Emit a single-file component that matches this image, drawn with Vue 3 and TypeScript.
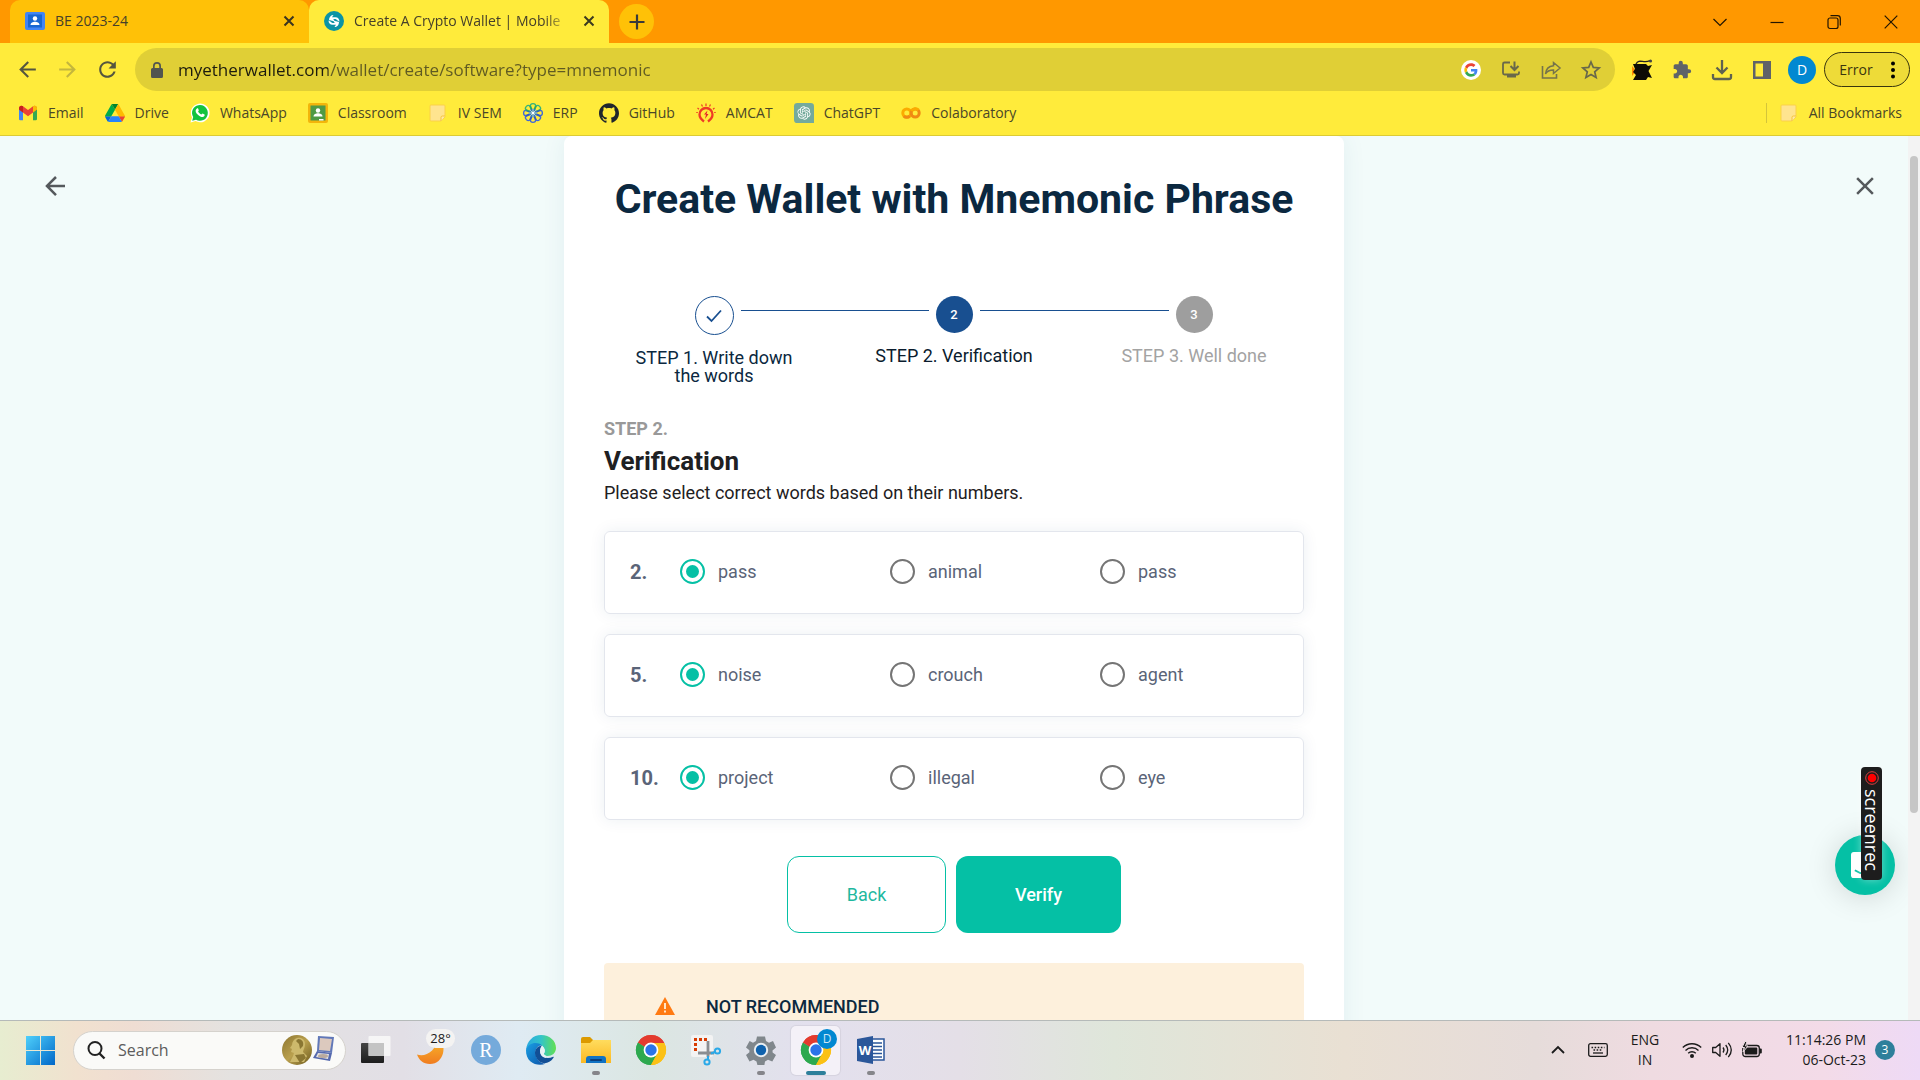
<script setup lang="ts">
import { reactive } from 'vue'

interface Bookmark {
  label: string
  box: string
  icon: string
}

interface Question {
  number: number
  words: string[]
}

interface TaskApp {
  label: string
  icon: string
  state: 'idle' | 'running' | 'active'
}

const folder =
  '<path d="M3 2h13a1 1 0 0 1 1 1v11l-4 4H3a1 1 0 0 1-1-1V3a1 1 0 0 1 1-1z" fill="#ffe48f" stroke="#fbd149"/><path d="M13 18v-3.500a1.500 1.500 0 0 1 1.500-1.500H17" fill="#ffe9a8" stroke="#f4c23a"/>'

const chrome =
  '<path d="M15 15 2 7.500A15 15 0 0 1 28 7.500z" fill="#e33b2e"/><path d="M15 15 28 7.500A15 15 0 0 1 15 30z" fill="#fbc116"/><path d="M15 15v15A15 15 0 0 1 2 7.500z" fill="#2da94f"/><path d="M15 8h13.300A15 15 0 0 1 15 30l6-11z" fill="#fbc116"/><path d="M2 7.500 9 18.500l6 4L15 30A15 15 0 0 1 2 7.500z" fill="#2da94f"/><path d="M15 30l6.300-11-6.300 4z" fill="#fbc116"/><path d="M15 30 21 19l-9 2-3-2.500z" fill="#2da94f"/><path d="M15 30 21.500 18.500 28 8A15 15 0 0 1 15 30z" fill="#fbc116"/><path d="M2 7.500A15 15 0 0 1 28.300 8H15l-6 4z" fill="#e33b2e"/><circle cx="15" cy="15" r="7.400" fill="#fff"/><circle cx="15" cy="15" r="5.700" fill="#2b74e8"/>'

const bookmarks: Bookmark[] = [
  {
    label: 'Email',
    box: '0 0 20 20',
    icon: '<path d="M1 4.500V16a1.200 1.200 0 0 0 1.200 1.200H5V9z" fill="#4285f4"/><path d="M15 9v8.200h2.800A1.200 1.200 0 0 0 19 16V4.500z" fill="#34a853"/><path d="M1 5.200C1 3 3.200 2 5 3.200l5 3.900 5-3.900c1.800-1.200 4-.2 4 2v1.300l-9 6.700-9-6.700z" fill="#ea4335"/><path d="M1 5.200v1.300l4 3V3.200C3.200 2 1 3 1 5.200z" fill="#c5221f"/><path d="M15 3.200v6.300l4-3V5.200c0-2.200-2.200-3.200-4-2z" fill="#fbbc04"/>',
  },
  {
    label: 'Drive',
    box: '0 0 87.3 78',
    icon: '<path d="m6.600 66.850 3.850 6.650c.8 1.400 1.950 2.500 3.300 3.300l13.750-23.800h-27.500c0 1.550.4 3.100 1.200 4.500z" fill="#0066da"/><path d="m43.650 25-13.750-23.800c-1.350.8-2.500 1.900-3.300 3.300l-25.400 44a9.060 9.060 0 0 0-1.200 4.500h27.500z" fill="#00ac47"/><path d="m73.550 76.800c1.350-.8 2.500-1.900 3.300-3.300l1.600-2.750 7.650-13.250c.8-1.400 1.200-2.950 1.200-4.500h-27.502l5.852 11.500z" fill="#ea4335"/><path d="m43.650 25 13.750-23.800c-1.350-.8-2.900-1.200-4.500-1.200h-18.500c-1.600 0-3.150.45-4.500 1.200z" fill="#00832d"/><path d="m59.800 53h-32.300l-13.750 23.800c1.350.8 2.900 1.200 4.500 1.200h50.800c1.600 0 3.150-.45 4.500-1.200z" fill="#2684fc"/><path d="m73.400 26.500-12.700-22c-.8-1.400-1.950-2.500-3.300-3.300l-13.750 23.800 16.150 28h27.450c0-1.550-.4-3.100-1.200-4.500z" fill="#ffba00"/>',
  },
  {
    label: 'WhatsApp',
    box: '0 0 20 20',
    icon: '<path d="M.5 19.500 2 14.500a9.400 9.400 0 1 1 3.600 3.600z" fill="#fff"/><path d="M2.200 17.800l1-3.700a7.900 7.900 0 1 1 2.800 2.700z" fill="#12c33e"/><path d="M6.900 5.400c.5-.4 1-.2 1.200.2l.7 1.700c.1.400-.6 1-.7 1.300.7 1.400 1.800 2.400 3.300 3 .3 0 .9-1.100 1.200-1l1.900.9c.6.500-.2 2-1.200 2.300-1.300.5-3.300-.1-5.400-2.100S5.300 8.200 5.800 6.900c.2-.6.600-1.200 1.100-1.500z" fill="#fff"/>',
  },
  {
    label: 'Classroom',
    box: '0 0 20 20',
    icon: '<rect width="20" height="20" rx="2" fill="#f3b50b"/><rect x="2.500" y="2.500" width="15" height="15" fill="#4f9a45"/><circle cx="10" cy="7.500" r="2.200" fill="#fff"/><path d="M5.500 13.500c0-2.400 2.500-3.200 4.500-3.200s4.500.8 4.500 3.200z" fill="#fff"/><rect x="11" y="16" width="4.500" height="1.500" fill="#fff"/>',
  },
  { label: 'IV SEM', box: '0 0 20 20', icon: folder },
  {
    label: 'ERP',
    box: '0 0 20 20',
    icon:
      [0, 45, 90, 135, 180, 225, 270, 315]
        .map(
          (a) =>
            `<g transform="rotate(${a} 10 10)"><path d="M8.800 6.500 7.300 2.500M11.200 6.500l1.500-4" stroke="${a > 60 && a < 300 ? '#2f55c8' : '#27a66b'}" stroke-width="1.300"/><path d="M7.300 3a2.700 2.400 0 0 1 5.400 0" fill="none" stroke="${a > 60 && a < 300 ? '#3f68d8' : '#35b37b'}" stroke-width="1.300"/></g>`,
        )
        .join('') + '<circle cx="10" cy="10" r="4.200" fill="#3579b5"/><path d="M10 6v8M6 10h8M7.200 7.200l5.600 5.600M12.800 7.200l-5.600 5.600" stroke="#dff0d0" stroke-width=".8"/><circle cx="10" cy="10" r="1.300" fill="#fff"/>',
  },
  {
    label: 'GitHub',
    box: '0 0 24 24',
    icon: '<path fill="#20262c" d="M12 .297c-6.630 0-12 5.373-12 12 0 5.303 3.438 9.800 8.205 11.385.6.113.82-.258.82-.577 0-.285-.01-1.040-.015-2.040-3.338.724-4.042-1.610-4.042-1.610C4.422 18.070 3.633 17.700 3.633 17.700c-1.087-.744.084-.729.084-.729 1.205.084 1.838 1.236 1.838 1.236 1.070 1.835 2.809 1.305 3.495.998.108-.776.417-1.305.76-1.605-2.665-.3-5.466-1.332-5.466-5.930 0-1.310.465-2.380 1.235-3.220-.135-.303-.54-1.523.105-3.176 0 0 1.005-.322 3.300 1.230.96-.267 1.980-.399 3-.405 1.020.006 2.040.138 3 .405 2.280-1.552 3.285-1.230 3.285-1.230.645 1.653.24 2.873.12 3.176.765.84 1.230 1.910 1.230 3.220 0 4.610-2.805 5.625-5.475 5.920.42.36.81 1.096.81 2.220 0 1.606-.015 2.896-.015 3.286 0 .315.21.69.825.57C20.565 22.092 24 17.592 24 12.297c0-6.627-5.373-12-12-12"/>',
  },
  {
    label: 'AMCAT',
    box: '0 0 20 20',
    icon: '<path d="M8 18.500C4.500 16 3.500 13.500 3.500 11.500a6.500 6.500 0 0 1 13 0c0 2-1 4.500-4.500 7" fill="none" stroke="#ee3b26" stroke-width="2.300"/><path d="M11.500 7.500 8 11.500h2l-1 4.500 3.500-5h-2z" fill="#e6222a"/><path d="M10 .5v2.500M5.500 1.500l1 2M14.500 1.500l-1 2M1.500 5l1.500 1.200M18.500 5 17 6.200M.3 9.500h1.500M19.700 9.500h-1.500" stroke="#ee3b26" stroke-width="1.200"/>',
  },
  {
    label: 'ChatGPT',
    box: '-6 -6 36 36',
    icon: '<path d="M0-6h24a6 6 0 0 1 6 6v30H0a6 6 0 0 1-6-6V0a6 6 0 0 1 6-6z" fill="#74aa9c"/><path fill="#fff" d="M22.282 9.821a5.985 5.985 0 0 0-.516-4.911 6.046 6.046 0 0 0-6.510-2.900A6.065 6.065 0 0 0 4.981 4.182a5.985 5.985 0 0 0-3.998 2.900 6.046 6.046 0 0 0 .743 7.097 5.980 5.980 0 0 0 .511 4.911 6.051 6.051 0 0 0 6.515 2.900A5.985 5.985 0 0 0 13.260 24a6.056 6.056 0 0 0 5.772-4.206 5.989 5.989 0 0 0 3.998-2.900 6.056 6.056 0 0 0-.748-7.073zm-9.022 12.608a4.476 4.476 0 0 1-2.876-1.041l.142-.08 4.778-2.758a.795.795 0 0 0 .393-.681v-6.737l2.020 1.169a.071.071 0 0 1 .038.052v5.583a4.504 4.504 0 0 1-4.495 4.494zM3.599 18.304a4.471 4.471 0 0 1-.535-3.014l.142.085 4.783 2.758a.771.771 0 0 0 .781 0l5.843-3.369v2.332a.08.08 0 0 1-.033.062L9.740 19.950a4.499 4.499 0 0 1-6.141-1.646zM2.341 7.896a4.485 4.485 0 0 1 2.365-1.973V11.600a.766.766 0 0 0 .388.677l5.814 3.354-2.020 1.169a.076.076 0 0 1-.071 0l-4.830-2.787A4.504 4.504 0 0 1 2.341 7.872zm16.596 3.856L13.104 8.364 15.119 7.200a.076.076 0 0 1 .071 0l4.830 2.791a4.494 4.494 0 0 1-.677 8.104v-5.677a.79.79 0 0 0-.407-.667zm2.011-3.023-.142-.085-4.774-2.782a.776.776 0 0 0-.785 0L9.409 9.230V6.897a.066.066 0 0 1 .028-.062l4.830-2.787a4.499 4.499 0 0 1 6.680 4.660zM8.307 12.863l-2.020-1.164a.08.08 0 0 1-.038-.057V6.074a4.499 4.499 0 0 1 7.376-3.454l-.142.081L8.704 5.459a.795.795 0 0 0-.393.681zm1.098-2.365 2.602-1.500 2.607 1.500v2.999l-2.597 1.500-2.607-1.500z"/>',
  },
  {
    label: 'Colaboratory',
    box: '0 0 20 20',
    icon: '<circle cx="5.800" cy="10" r="4" fill="none" stroke="#fbab00" stroke-width="3"/><circle cx="14.200" cy="10" r="4" fill="none" stroke="#f08a13" stroke-width="3"/><path d="M10.500 8a4.500 4.500 0 0 1 7-1" fill="none" stroke="#fbab00" stroke-width="3"/><path d="M8.800 13a4 4 0 0 1-6 0" fill="none" stroke="#f08a13" stroke-width="3"/>',
  },
]

const questions: Question[] = [
  { number: 2, words: ['pass', 'animal', 'pass'] },
  { number: 5, words: ['noise', 'crouch', 'agent'] },
  { number: 10, words: ['project', 'illegal', 'eye'] },
]

const answers = reactive<number[]>([0, 0, 0])

const steps = [
  { number: 1, label: 'STEP 1. Write down the words', state: 'done' },
  { number: 2, label: 'STEP 2. Verification', state: 'current' },
  { number: 3, label: 'STEP 3. Well done', state: 'ahead' },
]

const apps: TaskApp[] = [
  {
    label: 'Task view',
    state: 'idle',
    icon: '<defs><linearGradient id="tv" x2="0" y2="1"><stop stop-color="#444"/><stop offset="1" stop-color="#1d1d1d"/></linearGradient></defs><rect y="8" width="23" height="20" rx="1" fill="url(#tv)"/><rect x="7.500" y="1" width="22" height="20" rx="1" fill="#f8f8f8" opacity=".88"/><rect x="7.500" y="8" width="15.500" height="13" fill="#bdbdbd" opacity=".8"/>',
  },
  {
    label: 'Weather',
    state: 'idle',
    icon: '<defs><linearGradient id="mn" x2="0" y2="1"><stop stop-color="#f8be2c"/><stop offset="1" stop-color="#f07c20"/></linearGradient></defs><path d="M22 1c10 9 6 28-8 28C7 29 3 25 1 19.500c8 3 20-3 21-18.500z" fill="url(#mn)"/>',
  },
  {
    label: 'R',
    state: 'idle',
    icon: '<circle cx="15" cy="15" r="15" fill="#75aadb"/><text x="15" y="22" font-size="20" text-anchor="middle" fill="#fff" font-family="Liberation Serif, serif">R</text>',
  },
  {
    label: 'Edge',
    state: 'idle',
    icon: '<defs><linearGradient id="e1" x1="0" x2="1"><stop stop-color="#2aa9e0"/><stop offset=".5" stop-color="#33c4c9"/><stop offset="1" stop-color="#63e051"/></linearGradient><linearGradient id="e2" x1="0" y1="0" x2="1" y2="1"><stop stop-color="#1aa0e4"/><stop offset="1" stop-color="#0d53a8"/></linearGradient></defs><path d="M0 15C1 6 7 0 15 0c9 0 15 6 15 13 0 5-4 8-8.500 8-3 0-4-1.200-3.500-2.500 1.500-2 1-4-.5-6C13 7 4 9 0 15z" fill="url(#e1)"/><path d="M0 15C2 8 11 6 16 10.500c-3-.5-6.500 2-6.500 7 0 6 4.500 11 10 11.200C12 32-.5 28 0 15z" fill="url(#e2)"/><path d="M16 10.500c-6 .8-8.500 6-6 11.500 3 7 12 9 17.500.8.500-.9-.1-1.200-.9-.8-3.600 1.900-9.600 1.200-11.500-2-1.300-2.300-1.200-5.500.9-9.500z" fill="#124f96"/><path d="M16 10.500c-2.500 3-2.500 6.500-.9 9.500 1 1.600 3 2.600 5 3 .7-1.300.2-2-1-2.800-1.500-1.200-1.300-1.700-.8-2.500 1.200-2.300.2-5.200-2.300-7.200z" fill="#e8f1f5"/>',
  },
  {
    label: 'File Explorer',
    state: 'running',
    icon: '<defs><linearGradient id="fx" x2="0" y2="1"><stop stop-color="#ffdc5e"/><stop offset="1" stop-color="#fbb923"/></linearGradient></defs><path d="M0 4a2 2 0 0 1 2-2h7l3 3v5H0z" fill="#dc9a00"/><path d="M0 8h9l3-3h18v23H0z" fill="url(#fx)"/><path d="M5 28v-4a3 3 0 0 1 3-3h14a3 3 0 0 1 3 3v4z" fill="#1173c4"/><rect x="9" y="24" width="12" height="2" rx="1" fill="#0a3f7d"/>',
  },
  { label: 'Chrome', state: 'idle', icon: chrome },
  {
    label: 'Snipping Tool',
    state: 'idle',
    icon: '<rect width="22" height="22" rx="2" fill="#f3f3f3"/><path d="M3 4.500h13M4.500 3v13" fill="none" stroke="#d83b01" stroke-width="3" stroke-dasharray="3 2"/><path d="M7 18h16M17 6v16" stroke="#8a8d91" stroke-width="2.800"/><circle cx="26.500" cy="16" r="2.600" fill="none" stroke="#2aa9e8" stroke-width="2"/><circle cx="16" cy="27" r="2.600" fill="none" stroke="#2aa9e8" stroke-width="2"/><path d="M20 18.500l4-1.500M17 21v3.500" stroke="#2aa9e8" stroke-width="2"/>',
  },
  {
    label: 'Settings',
    state: 'running',
    icon: '<path d="M11 1.500h8l1 4.500 3 1.700L27 6l3 6.500-3.500 3 .1 2 3.400 2.500-3.700 6.500-4.300-1.700-3 1.700-.6 3.500h-7l-.9-3.500-3-1.700L3.500 26.500 0 20l3.400-2.800v-2L0 12.500 3.600 6 7 7.700 10 6z" fill="#80878c"/><circle cx="15" cy="15" r="7.200" fill="#e9eef2"/><circle cx="15" cy="15" r="5.200" fill="#0f62ad"/>',
  },
  { label: 'Chrome profile D', state: 'active', icon: chrome },
  {
    label: 'Word',
    state: 'running',
    icon: '<path d="M14 4h14v21H14z" fill="#fff" stroke="#2b579a" stroke-width="1.500"/><path d="M17 8h9M17 11.500h9M17 15h9M17 18.500h9M17 22h9" stroke="#2b579a" stroke-width="1.700"/><path d="M1 4 17 1v28L1 26z" fill="#2b579a"/><text x="9" y="20" font-size="13" font-weight="700" text-anchor="middle" fill="#fff" font-family="Open Sans, sans-serif">W</text>',
  },
]
</script>

<template>
  <div class="screen">
    <header class="browser">
      <div class="tabs">
        <div class="tab">
          <svg class="tab-icon" viewBox="0 0 20 20"><rect y="1" width="20" height="18" rx="2" fill="#4285f4" /><rect x="3" y="3.500" width="14" height="13" fill="#1967d2" /><circle cx="10" cy="7.500" r="2.200" fill="#fff" /><path d="M5.500 14c0-2.500 2.500-3.300 4.500-3.300s4.500.8 4.500 3.300z" fill="#fff" /></svg>
          <span class="tab-title">BE 2023-24</span>
          <button class="tab-close" aria-label="Close tab"><svg viewBox="0 0 12 12"><path d="M1.500 1.500l9 9M10.500 1.500l-9 9" stroke="#3b3420" stroke-width="2" /></svg></button>
        </div>
        <div class="tab tab-active">
          <svg class="tab-icon" viewBox="0 0 20 20"><circle cx="10" cy="10" r="10" fill="#0b93a5" /><path d="M5 9C5 6 7 4 9.500 4L8 6.200h3.500c2.500 0 4 2 4 4.300l-2.300-1.300c-.6-.9-1.500-1.200-2.700-1.200H9.200L11 10.500 8 9.800C6.500 9.300 5.500 9.500 5 9zM15 11c0 3-2 5-4.500 5l1.500-2.200H8.500c-2.500 0-4-2-4-4.300l2.300 1.300c.6.900 1.500 1.200 2.700 1.200h1.300L9 9.500l3 .7c1.500.5 2.500.3 3 .8z" fill="#fff" /></svg>
          <span class="tab-title tab-fade">Create A Crypto Wallet | Mobile</span>
          <button class="tab-close" aria-label="Close tab"><svg viewBox="0 0 12 12"><path d="M1.500 1.500l9 9M10.500 1.500l-9 9" stroke="#3b3a20" stroke-width="2" /></svg></button>
        </div>
        <button class="new-tab" aria-label="New tab"><svg viewBox="0 0 16 16"><path d="M8 .5v15M.5 8h15" stroke="#3a3a3a" stroke-width="2.200" /></svg></button>
        <div class="window-controls">
          <button aria-label="Search tabs"><svg viewBox="0 0 14 14"><path d="M.5 4 7 10.500 13.500 4" /></svg></button>
          <button aria-label="Minimize"><svg viewBox="0 0 14 14"><path d="M.5 7.500h13" /></svg></button>
          <button aria-label="Restore"><svg viewBox="0 0 14 14"><rect x="1" y="3" width="10" height="10.500" rx="2" /><path d="M3.500.7h7a2.800 2.800 0 0 1 2.800 2.800v7" /></svg></button>
          <button aria-label="Close"><svg viewBox="0 0 14 14"><path d="M.7.7l12.600 12.600M13.300.7.7 13.300" /></svg></button>
        </div>
      </div>

      <div class="toolbar">
        <div class="nav">
          <button aria-label="Back"><svg viewBox="0 0 24 24"><path fill="#55563f" d="M20 11H7.830l5.590-5.590L12 4l-8 8 8 8 1.410-1.410L7.830 13H20v-2z" /></svg></button>
          <button aria-label="Forward"><svg viewBox="0 0 24 24"><path fill="#c4b63d" d="m12 4-1.410 1.410L16.170 11H4v2h12.170l-5.580 5.590L12 20l8-8z" /></svg></button>
          <button aria-label="Reload"><svg viewBox="0 0 24 24"><path fill="#55563f" d="M17.650 6.350C16.200 4.900 14.210 4 12 4c-4.420 0-7.990 3.580-7.990 8s3.570 8 7.990 8c3.730 0 6.840-2.550 7.730-6h-2.080c-.82 2.330-3.040 4-5.650 4-3.310 0-6-2.690-6-6s2.690-6 6-6c1.660 0 3.140.69 4.220 1.780L13 11h7V4l-2.350 2.350z" /></svg></button>
        </div>
        <div class="address">
          <svg class="lock" viewBox="0 0 12 16"><path d="M6 0a4 4 0 0 0-4 4v2H1.500A1.500 1.500 0 0 0 0 7.500v7A1.500 1.500 0 0 0 1.500 16h9a1.500 1.500 0 0 0 1.500-1.500v-7A1.500 1.500 0 0 0 10.500 6H10V4a4 4 0 0 0-4-4zm0 1.700A2.300 2.300 0 0 1 8.300 4v2H3.700V4A2.300 2.300 0 0 1 6 1.700z" fill="#52554f" /></svg>
          <input class="url" type="text" aria-label="Address" value="myetherwallet.com/wallet/create/software?type=mnemonic" />
          <button aria-label="Google"><svg viewBox="-12 -12 72 72"><circle cx="24" cy="24" r="36" fill="#fff" /><path fill="#EA4335" d="M24 9.500c3.540 0 6.710 1.220 9.210 3.600l6.850-6.850C35.900 2.380 30.470 0 24 0 14.620 0 6.510 5.380 2.560 13.220l7.980 6.190C12.430 13.720 17.740 9.500 24 9.500z" /><path fill="#4285F4" d="M46.980 24.550c0-1.570-.15-3.090-.38-4.550H24v9.020h12.940c-.58 2.960-2.260 5.480-4.780 7.180l7.730 6c4.510-4.180 7.090-10.360 7.090-17.650z" /><path fill="#FBBC05" d="M10.530 28.590c-.48-1.450-.76-2.990-.76-4.590s.27-3.140.76-4.590l-7.980-6.190C.92 16.460 0 20.120 0 24c0 3.880.92 7.540 2.560 10.780l7.970-6.190z" /><path fill="#34A853" d="M24 48c6.480 0 11.930-2.130 15.890-5.810l-7.730-6c-2.150 1.450-4.920 2.300-8.160 2.300-6.260 0-11.570-4.220-13.470-9.910l-7.980 6.190C6.510 42.620 14.620 48 24 48z" /></svg></button>
          <button aria-label="Install"><svg viewBox="0 0 20 20"><path d="M9 2.500H3.500a1.500 1.500 0 0 0-1.500 1.500v9a1.500 1.500 0 0 0 1.500 1.500h13A1.500 1.500 0 0 0 18 13v-1.500" fill="none" stroke="#69684a" stroke-width="1.800" /><path d="M6 14h9v3.500H6z" fill="#69684a" /><path d="M13.500 1.500v8M9.500 6l4 4 4-4" fill="none" stroke="#69684a" stroke-width="2" /></svg></button>
          <button aria-label="Share"><svg viewBox="0 0 20 20"><path d="M1.500 6v12h14v-4" fill="none" stroke="#75734a" stroke-width="1.600" /><path d="M12.500 2.500 19 8l-6.500 5.500V10c-4 0-6.500 1-8 4 .4-5 3-7.700 8-8.200z" fill="none" stroke="#75734a" stroke-width="1.500" /></svg></button>
          <button aria-label="Bookmark"><svg viewBox="0 0 20 20"><path d="m10 2 2.300 5.400 5.900.5-4.500 3.900 1.400 5.700-5.100-3-5.100 3 1.400-5.700L1.800 7.900l5.900-.5z" fill="none" stroke="#69684a" stroke-width="1.700" /></svg></button>
        </div>
        <div class="extensions">
          <button aria-label="Extension"><svg viewBox="0 0 20 20"><path d="M0 6l4 5-4 5z" fill="#ff8a00" /><path d="M1 4h13l2 2 4-1-3.500 6L20 18l-4-1-2 3H1l3-5-3-3 2-3z" fill="#0c0c06" /><path d="M4 4c3-6 8 0 14-3.500" fill="none" stroke="#222" stroke-width="1.400" /><circle cx="18.500" cy="1" r="1.600" fill="#444" /></svg></button>
          <button aria-label="Extensions"><svg viewBox="0 0 24 24"><path fill="#5f6368" d="M20.500 11H19V7c0-1.100-.9-2-2-2h-4V3.500a2.500 2.500 0 0 0-5 0V5H4c-1.100 0-1.990.9-1.990 2v3.800H3.500c1.490 0 2.700 1.210 2.700 2.700s-1.210 2.700-2.700 2.700H2V20c0 1.100.9 2 2 2h3.800v-1.500c0-1.490 1.210-2.700 2.700-2.700s2.700 1.210 2.700 2.700V22H17c1.100 0 2-.9 2-2v-4h1.500a2.500 2.500 0 0 0 0-5z" /></svg></button>
          <button aria-label="Downloads"><svg viewBox="0 0 20 20"><path d="M10 0v13M4.500 7.500 10 13l5.500-5.500M1 14v3a2 2 0 0 0 2 2h14a2 2 0 0 0 2-2v-3" fill="none" stroke="#5f6250" stroke-width="2.300" /></svg></button>
          <button aria-label="Side panel"><svg viewBox="0 0 20 20"><path d="M1 1h18v18H1zM3.500 3.500v13H11v-13z" fill="#5f6368" fill-rule="evenodd" /></svg></button>
          <button class="avatar">D</button>
          <button class="error">Error<svg viewBox="0 0 4 18"><circle cx="2" cy="2.500" r="2" /><circle cx="2" cy="9" r="2" /><circle cx="2" cy="15.500" r="2" /></svg></button>
        </div>
      </div>

      <nav class="bookmarks">
        <a v-for="b in bookmarks" :key="b.label" href="#"><svg :viewBox="b.box" v-html="b.icon" /><span>{{ b.label }}</span></a>
        <a class="all-bookmarks" href="#"><svg viewBox="0 0 20 20" v-html="folder" /><span>All Bookmarks</span></a>
      </nav>
    </header>

    <div class="viewport">
      <div class="page">
        <div class="side">
          <button aria-label="Go back"><svg viewBox="0 0 24 24"><path fill="#55595c" d="M20 11v2H8l5.500 5.500-1.420 1.420L4.160 12l7.920-7.920L13.500 5.500 8 11h12z" /></svg></button>
        </div>
        <main class="wallet">
          <h1>Create Wallet with Mnemonic Phrase</h1>

          <ol class="stepper">
            <li v-for="s in steps" :key="s.number" :class="['step', s.state]">
              <span class="rail"></span>
              <span class="dot">
                <svg v-if="s.state === 'done'" viewBox="0 0 16 16"><path d="M1 8.500 5.500 13 15 2.500" fill="none" stroke="#184f90" stroke-width="1.800" /></svg>
                <template v-else>{{ s.number }}</template>
              </span>
              <span class="rail"></span>
              <span class="step-label">{{ s.label }}</span>
            </li>
          </ol>

          <p class="eyebrow">STEP 2.</p>
          <h2>Verification</h2>
          <p class="lead">Please select correct words based on their numbers.</p>

          <form class="quiz" @submit.prevent>
            <fieldset v-for="(q, qi) in questions" :key="q.number" class="question">
              <span class="number">{{ q.number }}.</span>
              <label v-for="(word, wi) in q.words" :key="wi" class="choice">
                <input v-model="answers[qi]" type="radio" :name="`word-${q.number}`" :value="wi" />
                <span>{{ word }}</span>
              </label>
            </fieldset>
            <div class="actions">
              <button type="button" class="btn back">Back</button>
              <button type="submit" class="btn verify">Verify</button>
            </div>
          </form>

          <section class="notice">
            <svg viewBox="0 0 20 18"><path d="M10 0 20 18H0z" fill="#ff7a12" /><path d="M10 6v6M10 13.500v2" stroke="#fff1dc" stroke-width="1.800" /></svg>
            <strong>NOT RECOMMENDED</strong>
          </section>
        </main>
        <div class="side side-right">
          <button aria-label="Close"><svg viewBox="0 0 24 24"><path fill="#55595c" d="M19 6.410 17.590 5 12 10.590 6.410 5 5 6.410 10.590 12 5 17.590 6.410 19 12 13.410 17.590 19 19 17.590 13.410 12z" /></svg></button>
        </div>
        <button class="chat" aria-label="Chat"><svg viewBox="0 0 28 28"><path d="M3 0h22a3 3 0 0 1 3 3v24H3a3 3 0 0 1-3-3V3a3 3 0 0 1 3-3z" fill="#fff" /><path d="M4 19q10 7 20 0" fill="none" stroke="#05c0a5" stroke-width="1.800" /></svg></button>
        <div class="recorder">
          <svg viewBox="0 0 14 14"><circle cx="7" cy="7" r="6.300" fill="none" stroke="#e04040" /><circle cx="7" cy="7" r="4.300" fill="#f00" /></svg>
          <span>screenrec</span>
        </div>
      </div>
      <div class="scrollbar"><div class="thumb"></div></div>
    </div>

    <footer class="taskbar">
      <button class="start" aria-label="Start"><svg viewBox="0 0 29 29"><defs><linearGradient id="win" x2="1" y2="1"><stop stop-color="#4fd0fb" /><stop offset="1" stop-color="#0067c8" /></linearGradient></defs><path d="M0 0h14v14H0zM15 0h14v14H15zM0 15h14v14H0zM15 15h14v14H15z" fill="url(#win)" /></svg></button>
      <label class="search">
        <svg class="lens" viewBox="0 0 18 18"><circle cx="8" cy="7.500" r="6.500" fill="none" stroke="#222" stroke-width="2" /><path d="m12.500 12.500 5 5" stroke="#222" stroke-width="2.400" /></svg>
        <input type="text" placeholder="Search" aria-label="Search" />
        <svg class="medal" viewBox="0 0 52 30">
          <defs><linearGradient id="gold" x2="1" y2="1"><stop stop-color="#8c7530" /><stop offset=".5" stop-color="#b9a04e" /><stop offset="1" stop-color="#6d5a1e" /></linearGradient></defs>
          <circle cx="15" cy="15" r="15" fill="url(#gold)" />
          <path d="M15 3c5-1 8 2 8 6s-2 6-2 8l4 4-3 6H8l3-6 1-3-3-1 1-3-2-1 2-3c0-3 2-6 5-7z" fill="#cdb96c" /><path d="M16 4c4 0 6 3 5 7l-3 3-1-5-3-3zM13 20l9-1 2 4-6 5z" fill="#8a7632" />
          <path d="m36 1 16 1-2 16-15-2z" fill="#6178b8" /><path d="m38 3 12 1-2 12-11-1z" fill="#dcc9be" /><path d="m35 16 15 2-2 8-17-3z" fill="#5569ae" /><path d="m36 18 11 1-1 5-12-2z" fill="#e6e3e2" /><ellipse cx="41" cy="21" rx="5" ry="2" fill="#b9aaa0" />
        </svg>
      </label>
      <div class="apps">
        <button v-for="a in apps" :key="a.label" :class="['app', a.state]" :aria-label="a.label">
          <svg viewBox="0 0 30 30" v-html="a.icon" />
          <span v-if="a.label === 'Weather'" class="temp">28°</span>
          <span v-if="a.state === 'active'" class="profile">D</span>
        </button>
      </div>
      <div class="tray">
        <button class="t-up" aria-label="Hidden icons"><svg viewBox="0 0 14 14"><path d="m1 10 6-6 6 6" fill="none" stroke="#1b1b1b" stroke-width="1.800" /></svg></button>
        <button class="t-key" aria-label="Touch keyboard"><svg viewBox="0 0 20 14"><rect x=".7" y=".7" width="18.600" height="12.600" rx="1.800" fill="none" stroke="#1b1b1b" stroke-width="1.300" /><path d="M3.500 4.500h13M5.500 7h9" stroke="#1b1b1b" stroke-width="1.600" stroke-dasharray="1.600 1.500" /><path d="M5 10h10" stroke="#1b1b1b" stroke-width="1.300" /></svg></button>
        <button class="lang">ENG<br />IN</button>
        <button class="status" aria-label="Network, volume and battery">
          <svg viewBox="0 0 20 16"><path d="M.8 5.500a13 13 0 0 1 18.400 0M3.500 8.500a9.200 9.200 0 0 1 13 0M6.200 11.300a5.400 5.400 0 0 1 7.600 0" fill="none" stroke="#1b1b1b" stroke-width="1.400" /><circle cx="10" cy="14" r="2" fill="#1b1b1b" /></svg>
          <svg viewBox="0 0 20 16"><path d="M.7 5.500h3L8 1.700v12.600l-4.300-3.800h-3z" fill="none" stroke="#1b1b1b" stroke-width="1.300" stroke-linejoin="round" /><path d="M11 5.500q2 2.500 0 5M13.700 3q4 5 0 10M16.300.8q6 7.200 0 14.400" fill="none" stroke="#1b1b1b" stroke-width="1.300" /></svg>
          <svg viewBox="0 0 20 16"><rect x=".8" y="3.500" width="16.500" height="11" rx="2.500" fill="none" stroke="#1b1b1b" stroke-width="1.300" /><rect x="2.800" y="5.500" width="12.500" height="7" rx="1" fill="#1b1b1b" /><path d="M18 6.500h.8a1 1 0 0 1 1 1v3a1 1 0 0 1-1 1H18z" fill="#1b1b1b" /><path d="M3-.5 0 5.500h2.500L1 10l5-6H3.500L5-.5z" fill="#1b1b1b" stroke="#e9dbe0" stroke-width="1" /></svg>
        </button>
        <button class="clock">11:14:26 PM<br />06-Oct-23</button>
        <span class="count">3</span>
      </div>
    </footer>
  </div>
</template>

<style>
body {
  overflow: hidden;
}
</style>

<style scoped>
* {
  box-sizing: border-box;
}

.screen {
  display: flex;
  flex-direction: column;
  height: 100vh;
  font-family: 'Open Sans', 'Noto Sans', sans-serif;
}

svg {
  display: block;
  flex: none;
  overflow: visible;
}

button {
  display: flex;
  align-items: center;
  justify-content: center;
  padding: 0;
  border: 0;
  background: none;
  font: inherit;
  color: inherit;
}

/* Browser frame */
.browser {
  flex: none;
  background: #ffeb3b;
  border-bottom: 1px solid #dccb35;
}

.tabs {
  display: flex;
  align-items: center;
  height: 43px;
  padding-left: 10px;
  background: #ff9800;
}

.tab {
  display: flex;
  align-items: center;
  width: 299px;
  height: 43px;
  padding: 0 14px 2px 15px;
  border-radius: 10px 10px 0 0;
  background: #ffc107;
  color: #46402a;
  font-size: 14px;
}

.tab-active {
  width: 300px;
  background: #ffeb3b;
}

.tab-icon {
  width: 20px;
  height: 20px;
  margin-right: 10px;
}

.tab-title {
  flex: 1;
  white-space: nowrap;
}

.tab-fade {
  margin-right: 12px;
  mask-image: linear-gradient(90deg, #000 88%, transparent);
}

.tab-close svg {
  width: 12px;
  height: 12px;
}

.new-tab {
  width: 35px;
  height: 35px;
  margin-left: 10px;
  border-radius: 50%;
  background: #ffc107;
}

.new-tab svg {
  width: 16px;
  height: 16px;
}

.window-controls {
  display: flex;
  margin-left: auto;
  padding-right: 1px;
  height: 36px;
}

.window-controls button {
  width: 57px;
}

.window-controls svg {
  width: 14px;
  height: 14px;
  fill: none;
  stroke: #221500;
  stroke-width: 1.2;
}

.toolbar {
  display: flex;
  align-items: center;
  height: 53px;
  padding-right: 10px;
}

.nav {
  display: flex;
  width: 135px;
  padding-left: 7px;
}

.nav button {
  width: 40px;
}

.nav svg {
  width: 25px;
  height: 25px;
}

.address {
  display: flex;
  flex: 1;
  align-items: center;
  height: 43px;
  padding: 0 4px 0 16px;
  border-radius: 22px;
  background: #e0cf36;
}

.lock {
  width: 12px;
  height: 16px;
  margin-right: 15px;
}

.url {
  flex: 1;
  min-width: 0;
  padding: 0;
  border: 0;
  outline: 0;
  background: linear-gradient(90deg, #1c1b0d 150px, #5f5a22 150px);
  background-clip: text;
  color: transparent;
  font: inherit;
  font-size: 17px;
}

.address button {
  width: 40px;
}

.address svg:not(.lock) {
  width: 20px;
  height: 20px;
}

.extensions {
  display: flex;
  align-items: center;
  padding-left: 7px;
}

.extensions button {
  width: 40px;
}

.extensions svg {
  width: 20px;
  height: 20px;
}

.extensions .avatar {
  width: 28px;
  height: 28px;
  margin: 0 8px 0 6px;
  border-radius: 50%;
  background: #0288d1;
  color: #fff;
  font-size: 14px;
}

.extensions .error {
  width: 86px;
  height: 35px;
  gap: 18px;
  border: 1px solid #39350e;
  border-radius: 18px;
  background: #eedb38;
  color: #3a360e;
  font-size: 14px;
}

.extensions .error svg {
  width: 4px;
  height: 18px;
}

.bookmarks {
  display: flex;
  align-items: center;
  gap: 21px;
  height: 39px;
  padding: 0 18px 6px;
  color: #4a4728;
  font-size: 14px;
}

.bookmarks a {
  display: flex;
  align-items: center;
  gap: 10px;
  color: inherit;
  text-decoration: none;
  white-space: nowrap;
}

.bookmarks svg {
  width: 20px;
  height: 20px;
}

.bookmarks .all-bookmarks {
  margin-left: auto;
  padding-left: 12px;
  border-left: 1px solid #d4c43a;
}

/* Page */
.viewport {
  display: flex;
  flex: 1;
  min-height: 0;
  background: #f2fbfa;
  font-family: Roboto, sans-serif;
}

.page {
  position: relative;
  display: grid;
  flex: 1;
  grid-template-columns: 1fr minmax(0, 780px) 1fr;
  overflow: hidden;
}

.side {
  display: flex;
  align-items: flex-start;
  padding: 35px 28px 0 40px;
}

.side-right {
  justify-content: flex-end;
}

.side svg {
  width: 30px;
  height: 30px;
}

.scrollbar {
  width: 12px;
  padding: 20px 2px 0;
  background: #f3f3f3;
}

.thumb {
  height: 76%;
  border-radius: 4px;
  background: #c6c6c6;
}

.wallet {
  height: max-content;
  padding: 38px 40px 80px;
  border-radius: 8px;
  background: #fff;
  box-shadow: 0 0 24px rgba(20, 90, 130, 0.07);
}

h1,
h2,
p {
  margin: 0;
}

h1 {
  color: #0b2840;
  font-size: 41px;
  font-weight: 700;
  line-height: 50px;
  text-align: center;
}

.stepper {
  display: flex;
  margin: 72px -10px 0;
  padding: 0;
  list-style: none;
}

.step {
  display: grid;
  flex: 1;
  grid-template-columns: 1fr auto 1fr;
  column-gap: 7px;
  row-gap: 12px;
  align-content: start;
  color: #0b2840;
  font-size: 18px;
  line-height: 18px;
}

.rail {
  height: 1px;
  margin-top: 14px;
  background: #184f90;
}

.step:first-child .rail:first-child,
.step:last-child .rail:nth-child(3) {
  visibility: hidden;
}

.dot {
  display: flex;
  align-items: center;
  justify-content: center;
  width: 37px;
  height: 37px;
  border-radius: 50%;
  background: #184f90;
  color: #fff;
  font-size: 13px;
  font-weight: 500;
}

.done .dot {
  width: 39px;
  height: 39px;
  border: 1px solid #184f90;
  background: #fff;
}

.dot svg {
  width: 16px;
  height: 16px;
}

.ahead .dot {
  background: #9e9e9e;
}

.step-label {
  grid-column: 1 / -1;
  padding: 2px 34px;
  text-align: center;
}

.current .step-label {
  color: #0b1c2e;
}

.ahead .step-label {
  color: #a3a3a3;
}

.eyebrow {
  margin-top: 28px;
  color: #999;
  font-size: 18px;
  font-weight: 700;
  line-height: 28px;
}

h2 {
  color: #1e2022;
  font-size: 26px;
  font-weight: 700;
  line-height: 36px;
}

.lead {
  color: #1e2022;
  font-size: 18px;
  line-height: 28px;
}

.quiz {
  margin-top: 24px;
}

.question {
  display: grid;
  grid-template-columns: 50px 210px 210px 1fr;
  align-items: center;
  height: 83px;
  margin: 0 0 20px;
  padding: 0 0 2px 25px;
  border: 1px solid #e3e6ed;
  border-radius: 6px;
  background: #fff;
  box-shadow: 0 0 16px rgba(30, 60, 100, 0.08);
  color: #5a6478;
  font-size: 18px;
}

.number {
  font-size: 20px;
  font-weight: 700;
}

.choice {
  display: flex;
  align-items: center;
  gap: 13px;
}

.choice input {
  display: grid;
  place-items: center;
  width: 25px;
  height: 25px;
  margin: 0;
  border: 2px solid #757575;
  border-radius: 50%;
  appearance: none;
}

.choice input:checked {
  border-color: #05c0a5;
}

.choice input:checked::before {
  width: 13px;
  height: 13px;
  border-radius: 50%;
  background: #05c0a5;
  content: '';
}

.actions {
  display: flex;
  justify-content: center;
  gap: 10px;
  margin-top: 36px;
}

.btn {
  height: 77px;
  border-radius: 12px;
  font-size: 18px;
}

.back {
  width: 159px;
  border: 1px solid #05c0a5;
  color: #1fb89f;
}

.verify {
  width: 165px;
  background: #05c0a5;
  color: #fff;
  font-weight: 500;
}

.notice {
  display: flex;
  align-items: center;
  gap: 31px;
  height: 200px;
  margin-top: 30px;
  padding: 0 51px 114px;
  border-radius: 4px;
  background: #fdf0dc;
  color: #0b2840;
  font-size: 18px;
}

.notice strong {
  font-weight: 500;
}

.notice svg {
  width: 20px;
  height: 18px;
}

.chat {
  position: absolute;
  right: 13px;
  bottom: 125px;
  justify-content: flex-start;
  width: 60px;
  height: 60px;
  padding-left: 16px;
  border-radius: 50%;
  background: #05c0a5;
  box-shadow: 0 2px 30px rgba(0, 0, 0, 0.15);
}

.chat svg {
  width: 27px;
  height: 27px;
}

.recorder {
  position: absolute;
  right: 26px;
  bottom: 140px;
  display: flex;
  flex-direction: column;
  align-items: center;
  gap: 4px;
  width: 21px;
  height: 113px;
  padding-top: 4px;
  border-radius: 4px;
  background: #1d1d1d;
  box-shadow: 0 0 8px rgba(255, 255, 255, 0.4);
  color: #fff;
  font-family: 'Open Sans', sans-serif;
  font-size: 18px;
  line-height: 20px;
}

.recorder svg {
  width: 14px;
  height: 14px;
}

.recorder span {
  writing-mode: vertical-rl;
}

/* Taskbar */
.taskbar {
  display: flex;
  flex: none;
  align-items: center;
  height: 60px;
  padding: 0 25px 1px 26px;
  border-top: 1px solid #b5bab9;
  background: linear-gradient(90deg, #e7edd0 0, #f1e1cf 4%, #efddd3 7%, #e4e2e0 12%, #e2dfe6 21%, #dfebf3 27%, #dbe6e2 34%, #e3e0ee 42%, #e4dfe7 50%, #dfe6da 58%, #e9e0d3 70%, #e6dcda 80%, #efdbe1 86%, #f3dbe8 95%, #eedaf6 100%);
  color: #1b1b1b;
}

.start svg {
  width: 29px;
  height: 29px;
}

.search {
  display: flex;
  align-items: center;
  width: 273px;
  height: 39px;
  margin-left: 18px;
  padding: 0 11px 0 13px;
  border: 1px solid #d5d2cd;
  border-radius: 20px;
  background: #fafaf8;
}

.lens {
  width: 18px;
  height: 18px;
}

.search input {
  flex: 1;
  min-width: 0;
  padding: 0 0 0 13px;
  border: 0;
  outline: 0;
  background: none;
  font: inherit;
  font-size: 16px;
}

.search input::placeholder {
  color: #5c5c5c;
}

.medal {
  width: 52px;
  height: 30px;
}

.apps {
  display: flex;
  margin-left: 2px;
}

.app {
  position: relative;
  width: 49px;
  height: 49px;
  margin: 0 3px;
  border-radius: 5px;
}

.app svg {
  width: 30px;
  height: 30px;
}

.app.active {
  background: #f4f1f8;
  box-shadow: 0 0 1px 1px rgba(0, 0, 0, 0.06);
}

.running::after,
.active::after {
  position: absolute;
  bottom: 0;
  left: 50%;
  width: 8px;
  height: 4px;
  margin-left: -4px;
  border-radius: 2px;
  background: #85858a;
  content: '';
}

.active::after {
  width: 20px;
  margin-left: -10px;
  background: #2e7f9b;
}

.temp {
  position: absolute;
  top: 3px;
  right: 0;
  width: 29px;
  border-radius: 10px;
  background: #f4f3f2;
  font-size: 13px;
  line-height: 19px;
}

.profile {
  position: absolute;
  top: 3px;
  right: 3px;
  width: 20px;
  height: 20px;
  border-radius: 50%;
  background: #0288d1;
  color: #cfe6f5;
  font-size: 12px;
  line-height: 20px;
}

.tray {
  display: flex;
  align-items: center;
  margin-left: auto;
  font-size: 14px;
  line-height: 20px;
}

.t-up svg {
  width: 14px;
  height: 14px;
}

.t-key {
  margin-left: 23px;
}

.t-key svg {
  width: 20px;
  height: 14px;
}

.lang {
  width: 74px;
}

.status {
  gap: 10px;
}

.status svg {
  width: 20px;
  height: 16px;
}

.clock {
  width: 104px;
  justify-content: flex-end;
  text-align: right;
}

.count {
  width: 20px;
  height: 20px;
  margin-left: 9px;
  border-radius: 50%;
  background: #2e7f9b;
  color: #fff;
  font-size: 12px;
  line-height: 20px;
  text-align: center;
}
</style>
